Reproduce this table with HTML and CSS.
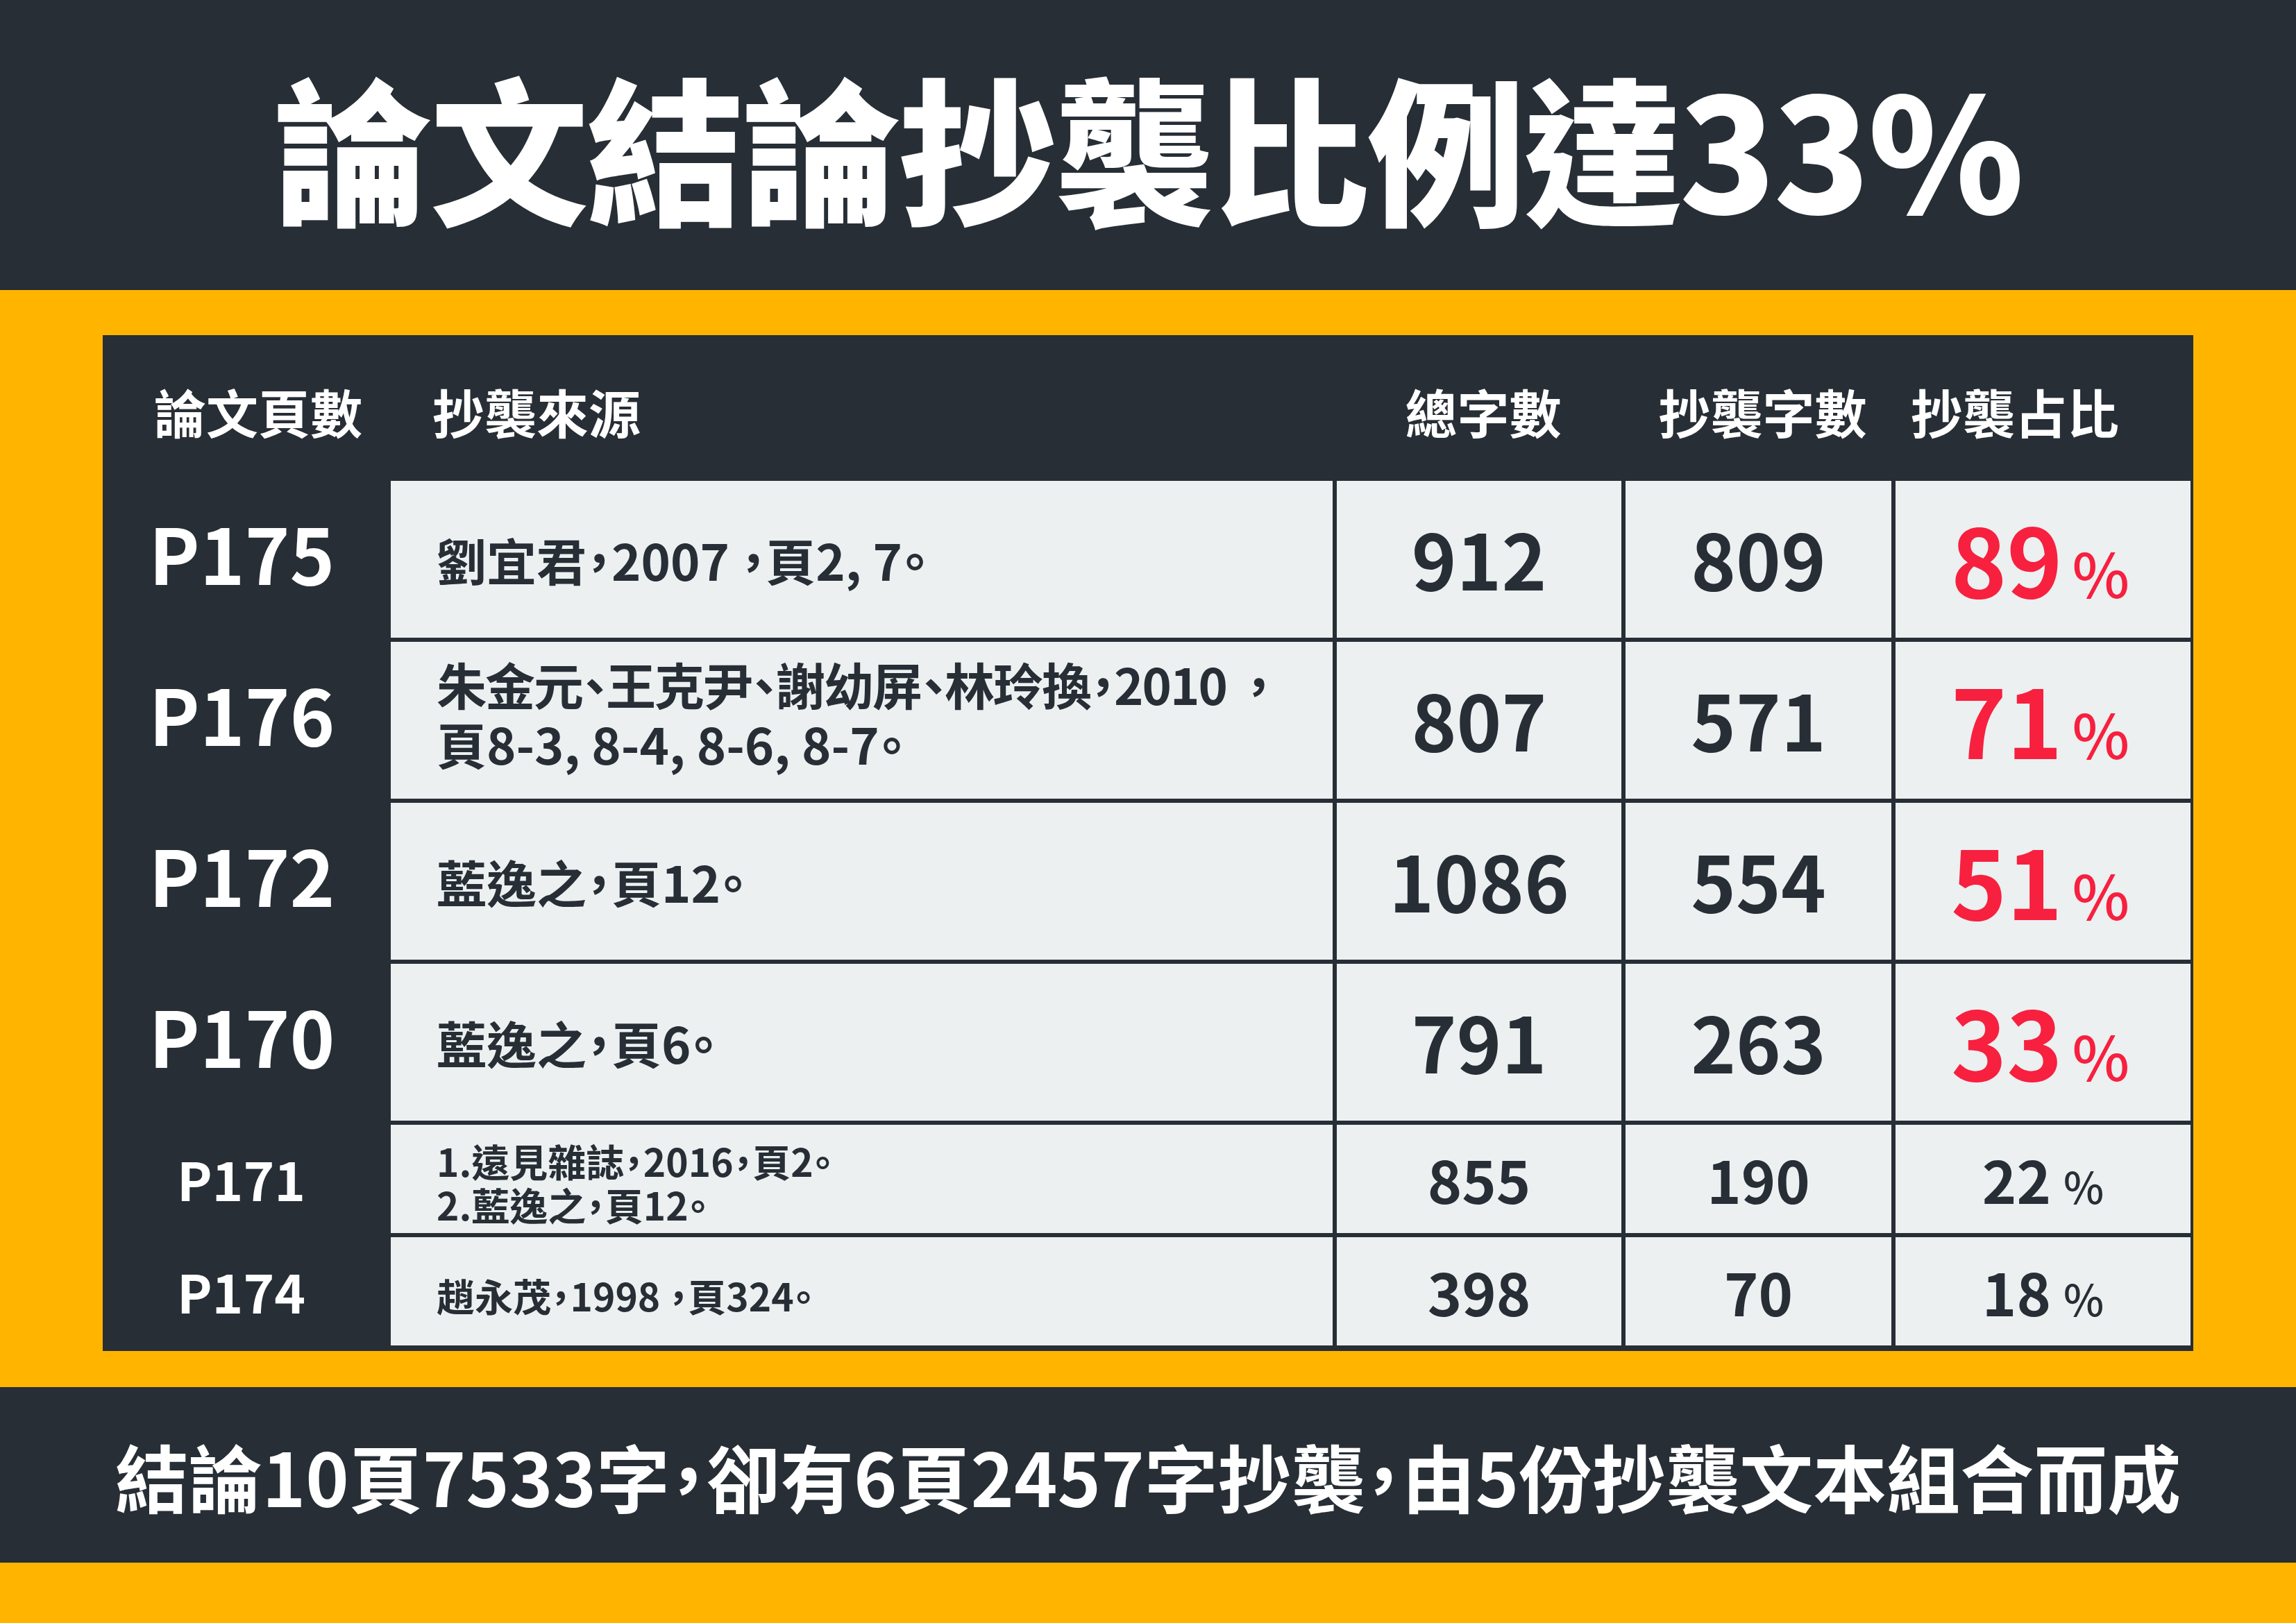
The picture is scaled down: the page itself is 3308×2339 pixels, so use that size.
FILE: index.html
```html
<!DOCTYPE html>
<html lang="zh-Hant">
<head>
<meta charset="utf-8">
<title>論文結論抄襲比例達33%</title>
<link rel="stylesheet" href="styles.css">
</head>
<body>
<div class="page">
  <header class="top">
    <h1 class="title">論文結論抄襲比例達33%</h1>
  </header>
  <main class="main">
    <div class="table">
      <div class="th th-page">論文頁數</div>
      <div class="th th-src">抄襲來源</div>
      <div class="th th-num">總字數</div>
      <div class="th th-num">抄襲字數</div>
      <div class="th th-ratio">抄襲占比</div>

      <div class="pg big">P175</div>
      <div class="cell src">劉宜君，2007 ，頁2, 7。</div>
      <div class="cell num">912</div>
      <div class="cell num">809</div>
      <div class="cell num red">89<span class="pct">%</span></div>

      <div class="pg big">P176</div>
      <div class="cell src two"><span class="line tight">朱金元、王克尹、謝幼屏、林玲換，2010&nbsp; ，</span><span class="line">頁8-3, 8-4, 8-6, 8-7。</span></div>
      <div class="cell num">807</div>
      <div class="cell num">571</div>
      <div class="cell num red">71<span class="pct">%</span></div>

      <div class="pg big">P172</div>
      <div class="cell src">藍逸之，頁12。</div>
      <div class="cell num">1086</div>
      <div class="cell num">554</div>
      <div class="cell num red">51<span class="pct">%</span></div>

      <div class="pg big">P170</div>
      <div class="cell src">藍逸之，頁6。</div>
      <div class="cell num">791</div>
      <div class="cell num">263</div>
      <div class="cell num red">33<span class="pct">%</span></div>

      <div class="pg small">P171</div>
      <div class="cell src sm multi"><span class="line">1.遠見雜誌，2016，頁2。</span><span class="line">2.藍逸之，頁12。</span></div>
      <div class="cell num sm">855</div>
      <div class="cell num sm">190</div>
      <div class="cell num sm">22<span class="pct">%</span></div>

      <div class="pg small">P174</div>
      <div class="cell src sm">趙永茂，1998 ，頁324。</div>
      <div class="cell num sm">398</div>
      <div class="cell num sm">70</div>
      <div class="cell num sm">18<span class="pct">%</span></div>
    </div>
  </main>
  <footer class="bottom">
    <p class="summary">結論10頁7533字，卻有6頁2457字抄襲，由5份抄襲文本組合而成</p>
  </footer>
</div>
</body>
</html>
```
FILE: styles.css
```css
html, body {
  margin: 0;
  padding: 0;
}
body {
  width: 3308px;
  height: 2339px;
  background: #ffb400;
  font-family: "Noto Sans CJK TC", "Noto Sans", sans-serif;
  overflow: hidden;
}
.page {
  width: 3308px;
  height: 2339px;
  display: flex;
  flex-direction: column;
}
.top {
  height: 418px;
  background: #272e35;
  display: flex;
  align-items: center;
  justify-content: center;
}
.title {
  margin: 0;
  color: #ffffff;
  font-size: 228px;
  font-weight: 900;
  line-height: 1;
  letter-spacing: -3px;
}
.main {
  padding: 65px 148px 52px 148px;
}
.table {
  background: #272e35;
  display: grid;
  grid-template-columns: 409px 1357px 410px 383px 425px;
  grid-template-rows: 204px 226px 226px 226px 226px 156px 156px;
  column-gap: 6px;
  row-gap: 6px;
  padding: 0 4px 8px 0;
  height: 1464px;
  box-sizing: border-box;
}
.th {
  color: #ffffff;
  font-size: 75px;
  line-height: 1.2;
  font-weight: 700;
  display: flex;
  align-items: center;
  padding-top: 16px;
  white-space: nowrap;
}
.th-page {
  padding-left: 74px;
}
.th-src {
  padding-left: 60px;
}
.th-num {
  justify-content: center;
  padding-left: 12px;
}
.th-ratio {
  padding-left: 22px;
}
.pg {
  color: #ffffff;
  font-weight: 700;
  line-height: 1.2;
  display: flex;
  align-items: center;
  justify-content: center;
}
.pg.big {
  font-size: 110px;
  padding-bottom: 22px;
  padding-right: 8px;
}
.pg.small {
  font-size: 76px;
  padding-right: 10px;
}
.cell {
  background: #ecf0f1;
  color: #272e35;
  font-weight: 700;
  display: flex;
  align-items: center;
}
.src {
  padding-left: 66px;
  font-size: 72px;
  line-height: 86px;
  font-feature-settings: "palt";
  white-space: nowrap;
}
.src.two {
  flex-direction: column;
  align-items: flex-start;
  justify-content: center;
  padding-bottom: 20px;
}
.src .line {
  display: block;
}
.src .line.tight {
  letter-spacing: -2px;
}
.src.sm {
  font-size: 55px;
  line-height: 63px;
  padding-top: 10px;
}
.src.multi {
  flex-direction: column;
  align-items: flex-start;
  justify-content: center;
}
.num {
  justify-content: center;
  align-items: baseline;
  font-size: 110px;
  line-height: 220px;
}
.num.red {
  color: #f7203f;
  font-size: 136px;
  padding-right: 8px;
}
.num .pct {
  font-size: 88px;
  font-weight: 500;
  margin-left: 14px;
}
.num.sm {
  font-size: 84px;
  line-height: 156px;
}
.num.sm .pct {
  font-size: 62px;
  margin-left: 18px;
}
.bottom {
  height: 253px;
  background: #272e35;
  display: flex;
  align-items: center;
  justify-content: center;
}
.summary {
  margin: 0;
  color: #ffffff;
  font-size: 106px;
  font-weight: 700;
  line-height: 1;
  font-feature-settings: "palt";
  white-space: nowrap;
}
```
